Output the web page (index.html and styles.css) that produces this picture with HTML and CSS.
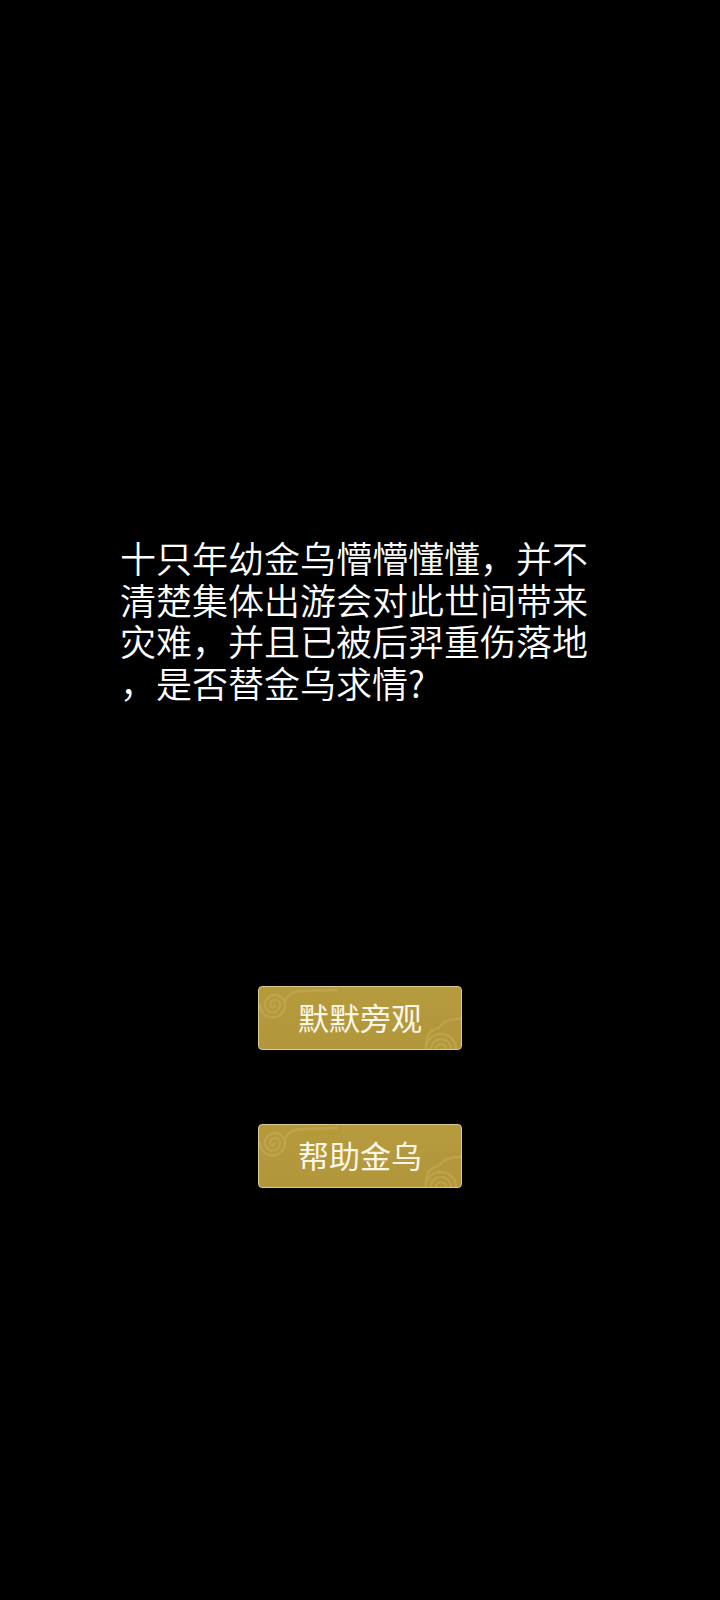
FILE: index.html
```html
<!DOCTYPE html>
<html>
<head>
    <title>金乌</title>
    <meta charset="UTF-8">
    <meta name="viewport" content="width=device-width, initial-scale=1.0">
    <link rel="stylesheet" href="styles.css">
</head>
<body>
    <div class="stage">
        <p class="story">十只年幼金乌懵懵懂懂，并不<br>清楚集体出游会对此世间带来<br>灾难，并且已被后羿重伤落地<br>，是否替金乌求情?</p>

        <div class="choices">
            <button class="choice" type="button">
                <svg class="cloud cloud-tl" width="80" height="44" viewBox="0 0 80 44">
                    <path d="M16,18 a2.5,2.5 0 0 1 -5,0 a5,5 0 0 1 10,0 a7.5,7.5 0 0 1 -15,0 a10,10 0 0 1 20,0 a12.5,12.5 0 0 1 -25,0 M26,18 C26,8 34,4 44,4 L78,3" />
                </svg>
                <span>默默旁观</span>
                <svg class="cloud cloud-br" width="56" height="56" viewBox="0 0 56 56">
                    <path d="M30,36 a2.5,2.5 0 0 1 -5,0 a5,5 0 0 1 10,0 a7.5,7.5 0 0 1 -15,0 a10,10 0 0 1 20,0 a12.5,12.5 0 0 1 -25,0 a15,15 0 0 1 30,0 M15,34 C14,22 20,16 28,15 C32,8 42,5 56,6" />
                </svg>
            </button>
            <button class="choice" type="button">
                <svg class="cloud cloud-tl" width="80" height="44" viewBox="0 0 80 44">
                    <path d="M16,18 a2.5,2.5 0 0 1 -5,0 a5,5 0 0 1 10,0 a7.5,7.5 0 0 1 -15,0 a10,10 0 0 1 20,0 a12.5,12.5 0 0 1 -25,0 M26,18 C26,8 34,4 44,4 L78,3" />
                </svg>
                <span>帮助金乌</span>
                <svg class="cloud cloud-br" width="56" height="56" viewBox="0 0 56 56">
                    <path d="M30,36 a2.5,2.5 0 0 1 -5,0 a5,5 0 0 1 10,0 a7.5,7.5 0 0 1 -15,0 a10,10 0 0 1 20,0 a12.5,12.5 0 0 1 -25,0 a15,15 0 0 1 30,0 M15,34 C14,22 20,16 28,15 C32,8 42,5 56,6" />
                </svg>
            </button>
        </div>
    </div>
</body>
</html>
```

FILE: styles.css
```css
body {
    margin: 0;
    padding: 0;
    background-color: #000000;
    font-family: "Noto Sans CJK SC", "Noto Sans", sans-serif;
}
.stage {
    width: 720px;
    height: 1600px;
    display: flex;
    flex-direction: column;
    align-items: center;
}
.story {
    margin: 537px 0 0 0;
    width: 482px;
    padding-left: 2px;
    color: #ffffff;
    font-size: 36px;
    line-height: 41.7px;
    font-weight: 350;
    white-space: nowrap;
}
.choices {
    margin-top: 282px;
    display: flex;
    flex-direction: column;
    align-items: center;
    gap: 74px;
}
.choice {
    position: relative;
    overflow: hidden;
    width: 204px;
    height: 64px;
    padding: 0;
    border: 1px solid #dccb8c;
    border-radius: 4px;
    background: linear-gradient(#b69b3e, #b1963b);
    color: #fbf6e6;
    font-family: "Noto Sans CJK SC", sans-serif;
    font-size: 31px;
    font-weight: 400;
    display: flex;
    align-items: center;
    justify-content: center;
    cursor: pointer;
}
.choice span {
    position: relative;
    margin-top: -2px;
}
.cloud {
    position: absolute;
    fill: none;
    stroke: #c3a955;
    stroke-width: 2.4;
    stroke-linecap: round;
    opacity: 0.7;
}
.cloud-tl {
    left: 0;
    top: 0;
}
.cloud-br {
    right: -6px;
    bottom: -20px;
}
```
